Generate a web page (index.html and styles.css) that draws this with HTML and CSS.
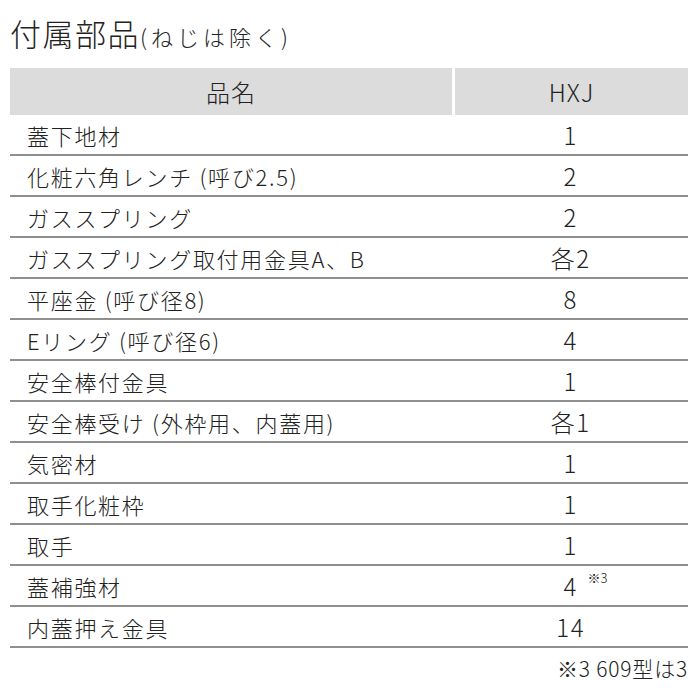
FILE: index.html
```html
<!DOCTYPE html>
<html lang="ja">
<head>
<meta charset="utf-8">
<link rel="stylesheet" href="styles.css">
</head>
<body>
<div class="page">
  <h1 class="title"><span class="title-main">付属部品</span><span class="title-sub">(ねじは除く)</span></h1>
  <table class="parts">
    <thead>
      <tr><th class="col-name">品名</th><th class="col-qty">HXJ</th></tr>
    </thead>
    <tbody>
      <tr><td class="name">蓋下地材</td><td class="qty">1</td></tr>
      <tr><td class="name">化粧六角レンチ (呼び2.5)</td><td class="qty">2</td></tr>
      <tr><td class="name">ガススプリング</td><td class="qty">2</td></tr>
      <tr><td class="name">ガススプリング取付用金具A、B</td><td class="qty">各2</td></tr>
      <tr><td class="name">平座金 (呼び径8)</td><td class="qty">8</td></tr>
      <tr><td class="name">Eリング (呼び径6)</td><td class="qty">4</td></tr>
      <tr><td class="name">安全棒付金具</td><td class="qty">1</td></tr>
      <tr><td class="name">安全棒受け (外枠用、内蓋用)</td><td class="qty">各1</td></tr>
      <tr><td class="name">気密材</td><td class="qty">1</td></tr>
      <tr><td class="name">取手化粧枠</td><td class="qty">1</td></tr>
      <tr><td class="name">取手</td><td class="qty">1</td></tr>
      <tr><td class="name">蓋補強材</td><td class="qty"><span class="qty-val">4<span class="note">※3</span></span></td></tr>
      <tr><td class="name">内蓋押え金具</td><td class="qty">14</td></tr>
    </tbody>
  </table>
  <p class="footnote">※3 609型は3</p>
</div>
</body>
</html>
```
FILE: styles.css
```css
html, body {
  margin: 0;
  padding: 0;
  background: #fff;
}
body {
  font-family: "Noto Sans CJK JP", "Noto Sans", sans-serif;
  font-weight: 300;
  color: #222;
}
.page {
  width: 678px;
  padding: 0 0 0 10px;
}
.title {
  margin: 14px 0 18px 0;
  height: 36px;
  line-height: 36px;
  font-weight: 300;
  white-space: nowrap;
}
.title-main {
  font-size: 31px;
  letter-spacing: 1.5px;
}
.title-sub {
  font-size: 22px;
  letter-spacing: 4px;
}
.parts {
  width: 678px;
  border-collapse: collapse;
  table-layout: fixed;
}
.parts th {
  background: #dcdcdc;
  font-weight: 300;
  font-size: 24px;
  letter-spacing: 1px;
  height: 47px;
  padding: 0;
  text-align: center;
}
.col-name {
  width: 442px;
  border-right: 3px solid #fff;
}
.parts td {
  height: 39px;
  padding: 0;
  font-size: 22px;
  letter-spacing: 1.7px;
  border-bottom: 2px solid #8f8f8f;
  white-space: nowrap;
}
.name {
  padding-left: 17px !important;
}
.qty {
  text-align: center;
  font-size: 24px !important;
}
.qty-val {
  position: relative;
}
.note {
  position: absolute;
  left: 24px;
  top: 0;
  font-size: 13px;
  letter-spacing: 0;
}
.footnote {
  margin: 8px 0 0 0;
  text-align: right;
  font-size: 21px;
  line-height: 24px;
  letter-spacing: 0.8px;
}
```
